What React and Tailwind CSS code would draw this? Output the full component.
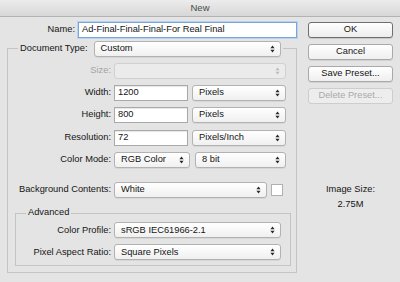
import React from 'react';

const font = { fontFamily: '"Liberation Sans", Arial, sans-serif' };

// tiny up/down stepper arrows used by mac popup buttons
const Arrows = ({ color = '#2a2a2a' }) => (
  <svg width="5" height="8" viewBox="0 0 5 8" className="shrink-0">
    <path d="M2.5 0.6L4.6 3.2H0.4Z M2.5 7.4L0.4 4.8H4.6Z" fill={color} />
  </svg>
);

const Select = ({ value, className = '', disabled = false }) => (
  <div
    className={`flex h-[16px] items-center justify-between rounded-[3px] border pl-[6px] pr-[5px] ${
      disabled
        ? 'border-[#d0d0d0] bg-[#ebebeb] text-[#a8a8a8]'
        : 'border-[#b2b2b2] bg-gradient-to-b from-white to-[#f0f0f0] text-[#141414] shadow-[0_1px_0_rgba(0,0,0,0.06)]'
    } ${className}`}
  >
    <span className="leading-none">{value}</span>
    <Arrows color={disabled ? '#bcbcbc' : '#2a2a2a'} />
  </div>
);

const Input = ({ value, className = '' }) => (
  <div
    className={`flex h-[16px] items-center border border-[#a9a9a9] bg-white pl-[3px] leading-none text-[#141414] shadow-[inset_0_1px_1px_rgba(0,0,0,0.1)] ${className}`}
  >
    {value}
  </div>
);

const Button = ({ children, primary = false, disabled = false }) => (
  <div
    className={`flex h-[16px] items-center justify-center rounded-[3px] border leading-none ${
      disabled
        ? 'border-[#cdcdcd] bg-[#ededed] text-[#a9a9a9]'
        : primary
        ? 'border-[#6f6f6f] bg-gradient-to-b from-white to-[#ededed] text-[#141414] shadow-[0_1px_0_rgba(0,0,0,0.12)]'
        : 'border-[#a9a9a9] bg-gradient-to-b from-white to-[#efefef] text-[#141414] shadow-[0_1px_0_rgba(0,0,0,0.08)]'
    }`}
  >
    {children}
  </div>
);

const Row = ({ label, labelW = 'w-[106px]', muted = false, className = '', children }) => (
  <div className={`flex items-center ${className}`}>
    <span className={`${labelW} shrink-0 pr-[3px] text-right leading-none ${muted ? 'text-[#a3a3a3]' : 'text-[#141414]'}`}>
      {label}
    </span>
    {children}
  </div>
);

export default function App() {
  return (
    <div className="flex h-[282px] w-[400px] flex-col overflow-hidden bg-[#e4e4e4] text-[9.3px]" style={font}>
      {/* title bar */}
      <div className="flex h-[17px] shrink-0 items-center justify-center border-b border-[#b3b3b3] bg-gradient-to-b from-[#ececec] to-[#d7d7d7] text-[9.5px] text-[#4a4a4a]">
        New
      </div>

      <div className="flex pt-[5px]">
        {/* left column */}
        <div className="ml-[7px] w-[290px]">
          <div className="flex items-center">
            <span className="flex-1 pr-[3px] text-right leading-none text-[#141414]">Name:</span>
            <div className="flex h-[16px] w-[219px] items-center border border-[#78a6da] bg-white pl-[3px] leading-none text-[#141414] shadow-[0_0_0_1px_#b8d2f0]">
              Ad-Final-Final-Final-For Real Final
            </div>
          </div>

          {/* Document Type group */}
          <div className="mt-[10px] h-[225px] border border-[#c4c4c4]">
            <div className="-mt-[8px] ml-[10px] flex w-fit items-center bg-[#e4e4e4] pl-[2px] pr-[2px]">
              <span className="pr-[6px] leading-none text-[#141414]">Document Type:</span>
              <Select value="Custom" className="w-[187px]" />
            </div>

            <Row label="Size:" muted className="mt-[6px]">
              <Select value="" disabled className="w-[172px]" />
            </Row>
            <Row label="Width:" className="mt-[6px]">
              <Input value="1200" className="w-[74px]" />
              <Select value="Pixels" className="ml-[4px] w-[94px]" />
            </Row>
            <Row label="Height:" className="mt-[6px]">
              <Input value="800" className="w-[74px]" />
              <Select value="Pixels" className="ml-[4px] w-[94px]" />
            </Row>
            <Row label="Resolution:" className="mt-[7px]">
              <Input value="72" className="w-[74px]" />
              <Select value="Pixels/Inch" className="ml-[4px] w-[94px]" />
            </Row>
            <Row label="Color Mode:" className="mt-[6px]">
              <Select value="RGB Color" className="w-[76px]" />
              <Select value="8 bit" className="ml-[5px] w-[91px]" />
            </Row>
            <Row label="Background Contents:" className="mt-[14px]">
              <Select value="White" className="w-[153px]" />
              <div className="ml-[4px] h-[12px] w-[12px] border border-[#b0b0b0] bg-white" />
            </Row>

            {/* Advanced group */}
            <div className="ml-[7px] mr-[5px] mt-[15px] border border-[#c4c4c4] pb-[5px]">
              <div className="-mt-[6px] ml-[10px] w-fit bg-[#e4e4e4] px-[2px] leading-none text-[#141414]">Advanced</div>
              <Row label="Color Profile:" labelW="w-[98px]" className="mt-[5px]">
                <Select value="sRGB IEC61966-2.1" className="w-[167px]" />
              </Row>
              <Row label="Pixel Aspect Ratio:" labelW="w-[98px]" className="mt-[6px]">
                <Select value="Square Pixels" className="w-[167px]" />
              </Row>
            </div>
          </div>
        </div>

        {/* right column */}
        <div className="ml-[11px] flex w-[85px] flex-col">
          <Button primary>OK</Button>
          <div className="mt-[6px]">
            <Button>Cancel</Button>
          </div>
          <div className="mt-[6px]">
            <Button>Save Preset...</Button>
          </div>
          <div className="mt-[6px]">
            <Button disabled>Delete Preset...</Button>
          </div>
          <div className="mt-[81px] text-center leading-none text-[#141414]">Image Size:</div>
          <div className="mt-[6px] text-center leading-none text-[#141414]">2.75M</div>
        </div>
      </div>
    </div>
  );
}
